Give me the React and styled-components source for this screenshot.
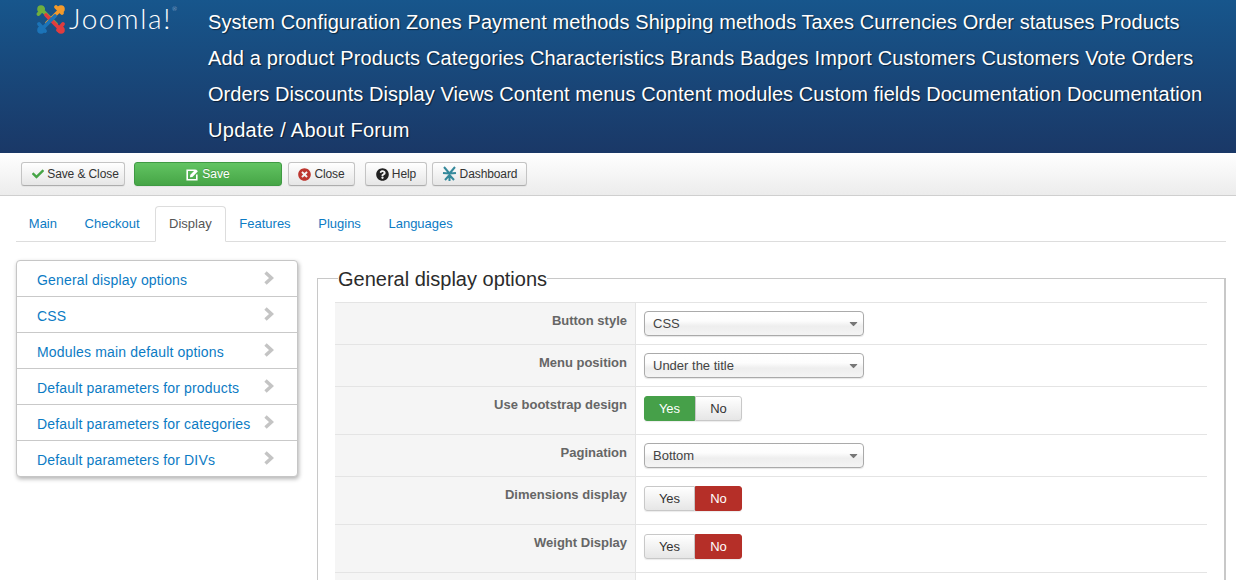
import React from 'react';
import styled, { createGlobalStyle } from 'styled-components';
import { FaCheck, FaTimesCircle, FaQuestionCircle, FaCaretDown } from 'react-icons/fa';

const GlobalStyle = createGlobalStyle`
  html, body {
    margin: 0;
    height: 580px;
    overflow: hidden;
    background: #fff;
    font-family: "Liberation Sans", Arial, sans-serif;
  }
`;

const MENU = [
  { spacing: 0.06, text: 'System Configuration Zones Payment methods Shipping methods Taxes Currencies Order statuses Products' },
  { spacing: 0.148, text: 'Add a product Products Categories Characteristics Brands Badges Import Customers Customers Vote Orders' },
  { spacing: 0.05, text: 'Orders Discounts Display Views Content menus Content modules Custom fields Documentation Documentation' },
  { spacing: 0.3, text: 'Update / About Forum' },
];

const TABS = ['Main', 'Checkout', 'Display', 'Features', 'Plugins', 'Languages'];

const SECTIONS = [
  'General display options',
  'CSS',
  'Modules main default options',
  'Default parameters for products',
  'Default parameters for categories',
  'Default parameters for DIVs',
];

const Header = styled.header`
  display: flex;
  height: 153px;
  box-sizing: border-box;
  padding-left: 36px;
  background: linear-gradient(180deg, #17568c 0%, #1a3867 100%);
`;

const LogoWrap = styled.div`
  display: flex;
  align-items: flex-start;
  width: 172px;
  flex: none;
  padding-top: 4px;
  gap: 3px;
`;

const LogoText = styled.span`
  font-family: "Lato", "Open Sans", sans-serif;
  font-weight: 300;
  font-size: 28px;
  line-height: 28px;
  letter-spacing: 1.6px;
  color: #fff;
`;

const LogoMark = styled.sup`
  font-size: 6px;
  line-height: 6px;
  vertical-align: 18px;
  letter-spacing: 0;
  color: #cfd8e4;
`;

const Menu = styled.nav`
  flex: 1;
  padding-top: 4px;
  color: #fff;
  text-shadow: 1px 1px 1px rgba(0, 0, 0, 0.55);
`;

const MenuLine = styled.div`
  font-size: 20px;
  line-height: 36px;
  white-space: nowrap;
  letter-spacing: ${({ $spacing }) => $spacing}px;
`;

const Toolbar = styled.div`
  display: flex;
  align-items: flex-start;
  height: 43px;
  box-sizing: border-box;
  padding: 9px 0 0 21px;
  background: linear-gradient(180deg, #ffffff 0%, #ececec 100%);
  border-bottom: 1px solid #cfcfcf;
`;

const Button = styled.button`
  display: flex;
  align-items: center;
  justify-content: center;
  gap: 3px;
  height: 24px;
  width: ${({ $w }) => $w}px;
  margin-right: ${({ $mr }) => $mr}px;
  padding: 0 0 0 ${({ $pl }) => $pl || 0}px;
  box-sizing: border-box;
  font: 12px/16px "Liberation Sans", Arial, sans-serif;
  letter-spacing: -0.1px;
  color: #333;
  border: 1px solid #c4c4c4;
  border-bottom-color: #adadad;
  border-radius: 3px;
  background: linear-gradient(180deg, #ffffff 0%, #e6e6e6 100%);
  box-shadow: 0 1px 1px rgba(0, 0, 0, 0.05);
`;

const SaveButton = styled(Button)`
  color: #fff;
  letter-spacing: 0;
  border-color: #3f9a43;
  background: linear-gradient(180deg, #62c462 0%, #46a546 100%);
  text-shadow: 0 -1px 0 rgba(0, 0, 0, 0.2);
`;

const Tabs = styled.ul`
  display: flex;
  align-items: flex-end;
  height: 35px;
  margin: 10px 10px 0 16px;
  padding: 0;
  list-style: none;
  border-bottom: 1px solid #ddd;
`;

const Tab = styled.li`
  box-sizing: border-box;
  height: 36px;
  margin-bottom: -1px;
  margin-left: ${({ $active }) => ($active ? '2px' : '0')};
  padding: 0 12.8px;
  font-size: 13px;
  line-height: 34px;
  color: ${({ $active }) => ($active ? '#555' : '#0c7bc4')};
  background: ${({ $active }) => ($active ? '#fff' : 'transparent')};
  border: 1px solid ${({ $active }) => ($active ? '#ddd' : 'transparent')};
  border-bottom-color: ${({ $active }) => ($active ? '#fff' : 'transparent')};
  border-radius: 4px 4px 0 0;
  &:first-child { margin-left: -1px; }
`;

const Body = styled.div`
  display: flex;
  align-items: flex-start;
  gap: 19px;
  padding: 18px 10px 0 16px;
`;

const SideNav = styled.ul`
  flex: none;
  width: 282px;
  box-sizing: border-box;
  margin: 0;
  padding: 0;
  list-style: none;
  background: #fff;
  border: 1px solid #c6c6c6;
  border-radius: 4px;
  box-shadow: 1px 2px 4px rgba(0, 0, 0, 0.3);
`;

const SideItem = styled.li`
  display: flex;
  align-items: center;
  justify-content: space-between;
  height: 36px;
  box-sizing: border-box;
  padding: 2px 23px 0 20px;
  font-size: 14px;
  letter-spacing: 0.17px;
  color: #0c7bc4;
  border-top: 1px solid #c9c9c9;
  &:first-child { height: 35px; border-top: none; }
`;

const Chevron = styled.svg`
  flex: none;
  width: 10px;
  height: 14px;
  margin-top: -4px;
`;

const Fieldset = styled.fieldset`
  flex: 1;
  min-width: 0;
  margin: 0;
  padding: 0 17px;
  border: 1px solid #c8c8c8;
  border-width: 1px 2px 0 1px;
`;

const Legend = styled.legend`
  margin-left: 3px;
  padding: 2px 0 0;
  font-size: 20px;
  line-height: 34px;
  color: #2b2b2b;
`;

const Rows = styled.div`
  margin-top: 6px;
  border-top: 1px solid #e4e4e4;
`;

const Row = styled.div`
  display: grid;
  grid-template-columns: 301px 1fr;
  height: ${({ $h }) => $h}px;
  box-sizing: border-box;
  border-bottom: 1px solid #e4e4e4;
`;

const Label = styled.div`
  box-sizing: border-box;
  padding: 10px 8px 0 0;
  font-size: 13px;
  font-weight: bold;
  line-height: 16px;
  text-align: right;
  color: #666;
  background: #f5f5f5;
  border-right: 1px solid #e4e4e4;
`;

const Control = styled.div`
  padding: ${({ $top }) => $top}px 0 0 8px;
`;

const Select = styled.div`
  display: flex;
  align-items: center;
  justify-content: space-between;
  width: 220px;
  height: 25px;
  box-sizing: border-box;
  padding: 0 3px 0 8px;
  font-size: 13px;
  color: #444;
  border: 1px solid #aaa;
  border-radius: 4px;
  background: linear-gradient(180deg, #ffffff 0%, #fdfdfd 38%, #eeeeee 62%, #f4f4f4 100%);
  box-shadow: 0 1px 1px rgba(0, 0, 0, 0.1);
  svg { color: #777; }
`;

const Toggle = styled.div`
  display: inline-flex;
  height: 25px;
`;

const ToggleButton = styled.div`
  display: flex;
  align-items: center;
  justify-content: center;
  box-sizing: border-box;
  width: ${({ $w }) => $w}px;
  font-size: 13px;
  color: ${({ $on }) => ($on ? '#fff' : '#333')};
  background: ${({ $on }) => $on || 'linear-gradient(180deg, #ffffff 0%, #e6e6e6 100%)'};
  border: 1px solid ${({ $on }) => $on || '#c8c8c8'};
  border-radius: ${({ $side }) => ($side === 'left' ? '3px 0 0 3px' : '0 3px 3px 0')};
  box-shadow: 0 1px 1px rgba(0, 0, 0, 0.08);
`;

const JoomlaIcon = () => (
  <svg width="30" height="31" viewBox="0 0 30 31" fill="none" strokeWidth="3.8" strokeLinecap="round">
    <path d="M2.5 10 L7 5 M5 5 L20 20" stroke="#6fae3f" />
    <circle cx="5" cy="5" r="3.8" fill="#6fae3f" />
    <path d="M20 3 L26 9 M25 5 L11 19" stroke="#f39a2b" />
    <circle cx="25" cy="5" r="3.8" fill="#f39a2b" />
    <path d="M27 20 L22 26 M25 26 L10 11" stroke="#e03c3f" />
    <circle cx="25" cy="26" r="3.8" fill="#e03c3f" />
    <path d="M3 20 L9 27 M5 26 L19 12" stroke="#1c74b8" />
    <circle cx="5" cy="26" r="3.8" fill="#1c74b8" />
  </svg>
);

const EditIcon = () => (
  <svg width="13" height="13" viewBox="0 0 13 13" fill="none">
    <path d="M9 2.2 H1.2 V11.8 H10.8 V6.5" stroke="#fff" strokeWidth="1.6" />
    <path d="M4.3 6.8 L9.8 1.2 L11.9 3.3 L6.4 8.9 L4 9.3 Z" fill="#fff" />
  </svg>
);

const DashIcon = () => (
  <svg width="15" height="16" viewBox="0 0 15 16" fill="none" stroke="#35899b" strokeWidth="2">
    <path d="M7.5 15 L7.5 7.5 M7.5 7.5 L2 1 M7.5 7.5 L13 1 M7.5 7.5 L1 7 M7.5 7.5 L14 7 M7.5 9 L3 14 M7.5 9 L12 14" />
  </svg>
);

const SelectRow = ({ label, value }) => (
  <Row $h={42}>
    <Label>{label}</Label>
    <Control $top={8}>
      <Select>
        {value}
        <FaCaretDown size={13} />
      </Select>
    </Control>
  </Row>
);

const ToggleRow = ({ label, yes }) => (
  <Row $h={48}>
    <Label>{label}</Label>
    <Control $top={9}>
      <Toggle>
        <ToggleButton $w={51} $side="left" $on={yes ? '#46a049' : undefined}>Yes</ToggleButton>
        <ToggleButton $w={47} $side="right" $on={yes ? undefined : '#b52f28'}>No</ToggleButton>
      </Toggle>
    </Control>
  </Row>
);

const App = () => {
  return (
    <>
      <GlobalStyle />
      <Header>
        <LogoWrap>
          <JoomlaIcon />
          <LogoText>Joomla!<LogoMark>®</LogoMark></LogoText>
        </LogoWrap>
        <Menu>
          {MENU.map((line) => (
            <MenuLine key={line.text} $spacing={line.spacing}>{line.text}</MenuLine>
          ))}
        </Menu>
      </Header>
      <Toolbar>
        <Button $w={104} $mr={9} $pl={5}><FaCheck size={12} color="#46a546" />Save &amp; Close</Button>
        <SaveButton $w={148} $mr={6}><EditIcon />Save</SaveButton>
        <Button $w={67} $mr={10}><FaTimesCircle size={13} color="#bd362f" />Close</Button>
        <Button $w={62} $mr={5}><FaQuestionCircle size={13} color="#222" />Help</Button>
        <Button $w={95} $mr={0}><DashIcon />Dashboard</Button>
      </Toolbar>
      <Tabs>
        {TABS.map((t) => (
          <Tab key={t} $active={t === 'Display'}>{t}</Tab>
        ))}
      </Tabs>
      <Body>
        <SideNav>
          {SECTIONS.map((s) => (
            <SideItem key={s}>
              {s}
              <Chevron viewBox="0 0 10 14" fill="none" stroke="#c4c4c4" strokeWidth="3.4">
                <path d="M1.5 1.5 L7.5 7 L1.5 12.5" />
              </Chevron>
            </SideItem>
          ))}
        </SideNav>
        <Fieldset>
          <Legend>General display options</Legend>
          <Rows>
            <SelectRow label="Button style" value="CSS" />
            <SelectRow label="Menu position" value="Under the title" />
            <ToggleRow label="Use bootstrap design" yes />
            <SelectRow label="Pagination" value="Bottom" />
            <ToggleRow label="Dimensions display" />
            <ToggleRow label="Weight Display" />
            <Row $h={48}><Label /><Control $top={9} /></Row>
          </Rows>
        </Fieldset>
      </Body>
    </>
  );
};

export default App;
